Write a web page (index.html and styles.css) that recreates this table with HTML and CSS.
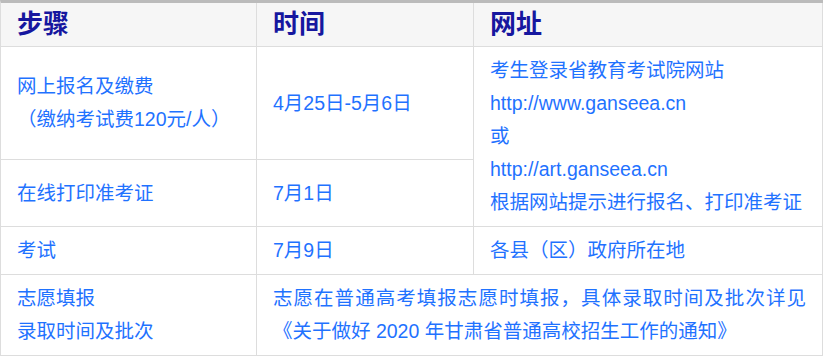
FILE: index.html
```html
<!DOCTYPE html>
<html lang="zh-CN">
<head>
<meta charset="utf-8">
<link rel="stylesheet" href="styles.css">
</head>
<body>
<table class="schedule">
  <colgroup>
    <col class="c1"><col class="c2"><col class="c3">
  </colgroup>
  <thead>
    <tr><th>步骤</th><th>时间</th><th>网址</th></tr>
  </thead>
  <tbody>
    <tr>
      <td>网上报名及缴费<br>（缴纳考试费120元/人）</td>
      <td>4月25日-5月6日</td>
      <td rowspan="2">考生登录省教育考试院网站<br>http://www.ganseea.cn<br>或<br>http://art.ganseea.cn<br>根据网站提示进行报名、打印准考证</td>
    </tr>
    <tr>
      <td>在线打印准考证</td>
      <td>7月1日</td>
    </tr>
    <tr>
      <td>考试</td>
      <td>7月9日</td>
      <td>各县（区）政府所在地</td>
    </tr>
    <tr>
      <td>志愿填报<br>录取时间及批次</td>
      <td colspan="2" class="notice">志愿在普通高考填报志愿时填报，具体录取时间及批次详见《关于做好 2020 年甘肃省普通高校招生工作的通知》</td>
    </tr>
  </tbody>
</table>
</body>
</html>
```

FILE: styles.css
```css
html, body {
  margin: 0;
  padding: 0;
  background: #ffffff;
}

.schedule {
  width: 823px;
  table-layout: fixed;
  border-collapse: separate;
  border-spacing: 0;
  border-top: 3px solid #bbbbbb;
  border-left: 1px solid #dddddd;
  font-family: "Liberation Sans", "Noto Sans CJK SC", sans-serif;
}

.c1 { width: 256px; }
.c2 { width: 217px; }
.c3 { width: 349px; }

.schedule th,
.schedule td {
  border-right: 1px solid #dddddd;
  border-bottom: 1px solid #dddddd;
  padding: 7px 16px;
  text-align: left;
  vertical-align: middle;
}

.schedule th {
  background: #f6f6f6;
  color: #16179f;
  font-size: 26px;
  font-weight: bold;
  line-height: 29px;
}

.schedule td {
  color: #1f72ff;
  font-size: 19.5px;
  line-height: 33px;
  white-space: nowrap;
}

.schedule td.notice {
  white-space: normal;
  text-align: justify;
}
```
